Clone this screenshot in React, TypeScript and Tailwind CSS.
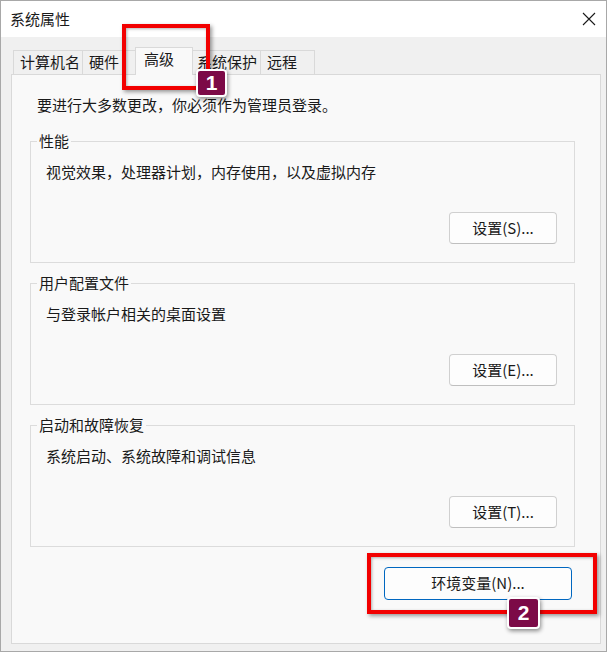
import React from "react";

const font = { fontFamily: '"Noto Sans CJK SC", "Microsoft YaHei", sans-serif' };

function Tab({ label, w, selected }: { label: string; w: string; selected?: boolean }) {
  if (selected) {
    return (
      <div
        className={`relative z-10 -mx-[2px] -mb-px flex h-[28px] items-center border border-b-0 border-[#d9d9d9] bg-[#f9f9f9] pl-[8px] text-[15px] leading-[20px] text-[#1a1a1a] ${w}`}
      >
        <span className="-mt-[5px]">{label}</span>
      </div>
    );
  }
  return (
    <div
      className={`flex h-[24px] items-center border border-b-0 border-l-0 border-[#d9d9d9] bg-[#f0f0f0] pl-[6px] text-[15px] leading-[20px] text-[#1a1a1a] first:border-l ${w}`}
    >
      <span className="-mt-[1px]">{label}</span>
    </div>
  );
}

function Btn({ label }: { label: string }) {
  return (
    <div className="flex h-[32px] w-[108px] items-center justify-center rounded-[4px] border border-[#d0d0d0] border-b-[#bfbfbf] bg-[#fdfdfd] text-[15px] text-[#1a1a1a]">
      {label}
    </div>
  );
}

function Group({ legend, text, btn, mt }: { legend: string; text: string; btn: string; mt: string }) {
  return (
    <fieldset className={`ml-[18px] mr-[25px] border border-[#dcdcdc] pb-[18px] ${mt}`}>
      <legend className="ml-[6px] px-[2px] text-[15px] leading-[20px] text-[#1a1a1a]">{legend}</legend>
      <div className="mt-[11px] pl-[15px] text-[15px] leading-[20px] text-[#1a1a1a]">{text}</div>
      <div className="mt-[30px] flex justify-end pr-[17px]">
        <Btn label={btn} />
      </div>
    </fieldset>
  );
}

function Badge({ n, cls }: { n: string; cls: string }) {
  return (
    <div
      className={`absolute flex items-center justify-center rounded-[4px] border-2 border-white bg-[#7c0a47] text-[21px] font-bold text-white shadow-[1px_2px_4px_rgba(0,0,0,0.45)] ${cls}`}
      style={{ fontFamily: '"Liberation Sans", Arial, sans-serif' }}
    >
      {n}
    </div>
  );
}

export default function App() {
  return (
    <div className="relative h-[653px] w-[609px] bg-white" style={font}>
      <div className="flex h-[652px] w-[607px] flex-col border border-[#a8a8a8] bg-[#f0f0f0]">
        <div className="flex h-[36px] items-center justify-between bg-white pl-[9px] pr-[9px]">
          <span className="text-[15px] leading-[20px] text-[#1a1a1a]">系统属性</span>
          <svg width="14" height="14" viewBox="0 0 14 14" className="mr-[1px]">
            <path d="M1 1 L13 13 M13 1 L1 13" stroke="#1a1a1a" strokeWidth="1.1" fill="none" />
          </svg>
        </div>
        <div className="flex flex-1 flex-col pb-[7px] pl-[10px] pr-[5px]">
          <div className="mt-[10px] flex h-[27px] items-end pl-[2px]">
            <Tab label="计算机名" w="w-[70px]" />
            <Tab label="硬件" w="w-[54px]" />
            <Tab label="高级" w="w-[58px]" selected />
            <Tab label="系统保护" w="w-[70px]" />
            <Tab label="远程" w="w-[54px]" />
          </div>
          <div className="flex flex-1 flex-col border border-[#d9d9d9] bg-[#f9f9f9]">
            <div className="mt-[20px] pl-[25px] text-[15px] leading-[20px] text-[#1a1a1a]">
              要进行大多数更改，你必须作为管理员登录。
            </div>
            <Group
              legend="性能"
              text="视觉效果，处理器计划，内存使用，以及虚拟内存"
              btn="设置(S)..."
              mt="mt-[16px]"
            />
            <Group legend="用户配置文件" text="与登录帐户相关的桌面设置" btn="设置(E)..." mt="mt-[10px]" />
            <Group legend="启动和故障恢复" text="系统启动、系统故障和调试信息" btn="设置(T)..." mt="mt-[10px]" />
            <div className="mt-[20px] flex justify-end pr-[28px]">
              <div className="flex h-[33px] w-[188px] items-center justify-center rounded-[4px] border border-[#0067c0] bg-[#fdfdfd] text-[15px] text-[#1a1a1a]">
                环境变量(N)...
              </div>
            </div>
          </div>
        </div>
      </div>

      <div className="absolute left-[122px] top-[24px] h-[66px] w-[88px] border-4 border-[#f20000] shadow-[2px_2px_4px_rgba(0,0,0,0.4),inset_1px_1px_3px_rgba(0,0,0,0.3)]" />
      <Badge n="1" cls="left-[196px] top-[69px] h-[28px] w-[31px]" />
      <div className="absolute left-[367px] top-[553px] h-[61px] w-[230px] border-4 border-[#f20000] shadow-[2px_2px_4px_rgba(0,0,0,0.4),inset_1px_1px_3px_rgba(0,0,0,0.3)]" />
      <Badge n="2" cls="left-[507px] top-[597px] h-[32px] w-[33px]" />
    </div>
  );
}
